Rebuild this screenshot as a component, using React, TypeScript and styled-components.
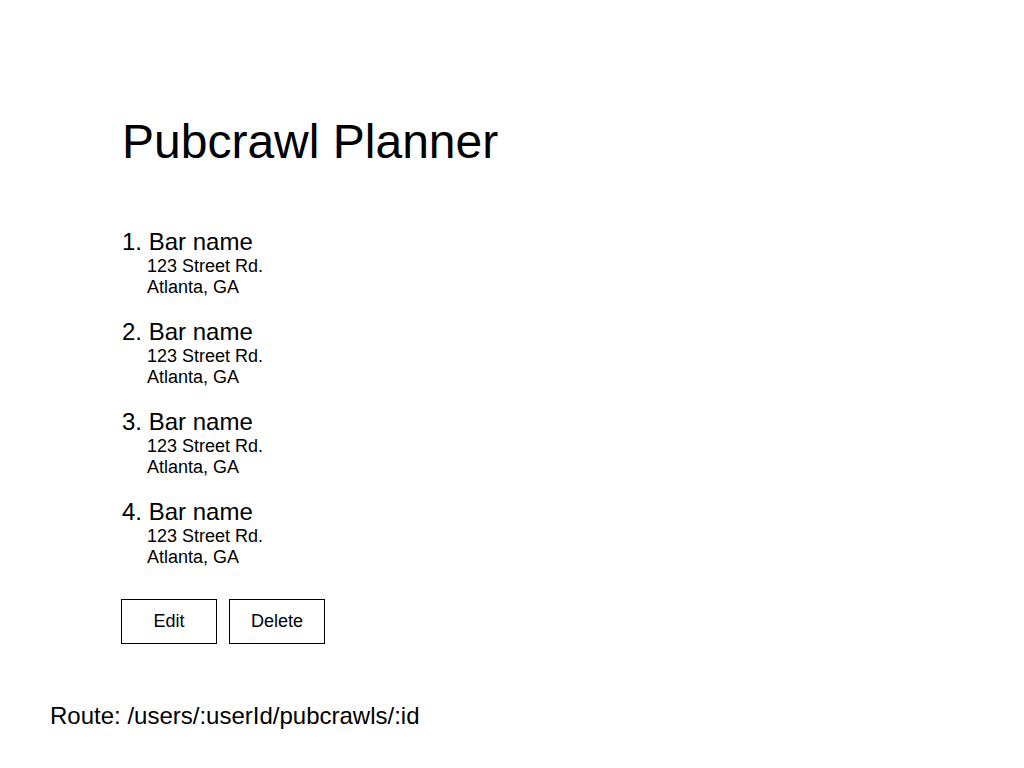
import React from "react";
import styled, { createGlobalStyle } from "styled-components";

const GlobalStyle = createGlobalStyle`
  html, body {
    margin: 0;
    padding: 0;
    background: #ffffff;
    color: #000000;
    font-family: "Liberation Sans", Arial, sans-serif;
  }
`;

const Page = styled.div`
  width: 1024px;
  height: 768px;
  box-sizing: border-box;
  padding: 114px 0 0 50px;
  display: flex;
  flex-direction: column;
`;

const Main = styled.main`
  margin-left: 71px;
  display: flex;
  flex-direction: column;
`;

const Title = styled.h1`
  margin: 0 0 0 1px;
  font-size: 48px;
  line-height: 56px;
  font-weight: 400;
`;

const BarList = styled.div`
  margin: 59px 0 0 1px;
  display: flex;
  flex-direction: column;
  gap: 21px;
`;

const BarItem = styled.div`
  display: flex;
  flex-direction: column;
`;

const BarName = styled.div`
  font-size: 24px;
  line-height: 26px;
`;

const AddressBlock = styled.div`
  margin-top: 1px;
  padding-left: 25px;
  display: flex;
  flex-direction: column;
`;

const AddressLine = styled.div`
  font-size: 18px;
  line-height: 21px;
`;

const ButtonRow = styled.div`
  margin-top: 31px;
  display: flex;
  gap: 12px;
`;

const Button = styled.button`
  width: 96px;
  height: 45px;
  box-sizing: border-box;
  border: 1px solid #000;
  background: #fff;
  color: #000;
  font-family: "Liberation Sans", Arial, sans-serif;
  font-size: 18px;
  padding: 0;
  display: flex;
  align-items: center;
  justify-content: center;
  cursor: pointer;
`;

const RouteLabel = styled.div`
  margin-top: 58px;
  font-size: 24px;
  line-height: 28px;
`;

const bars = [1, 2, 3, 4].map((n) => ({
  n,
  name: "Bar name",
  street: "123 Street Rd.",
  city: "Atlanta, GA",
}));

export default function App() {
  return (
    <>
      <GlobalStyle />
      <Page>
        <Main>
          <Title>Pubcrawl Planner</Title>
          <BarList>
            {bars.map((b) => (
              <BarItem key={b.n}>
                <BarName>
                  {b.n}. {b.name}
                </BarName>
                <AddressBlock>
                  <AddressLine>{b.street}</AddressLine>
                  <AddressLine>{b.city}</AddressLine>
                </AddressBlock>
              </BarItem>
            ))}
          </BarList>
          <ButtonRow>
            <Button>Edit</Button>
            <Button>Delete</Button>
          </ButtonRow>
        </Main>
        <RouteLabel>Route: /users/:userId/pubcrawls/:id</RouteLabel>
      </Page>
    </>
  );
}
